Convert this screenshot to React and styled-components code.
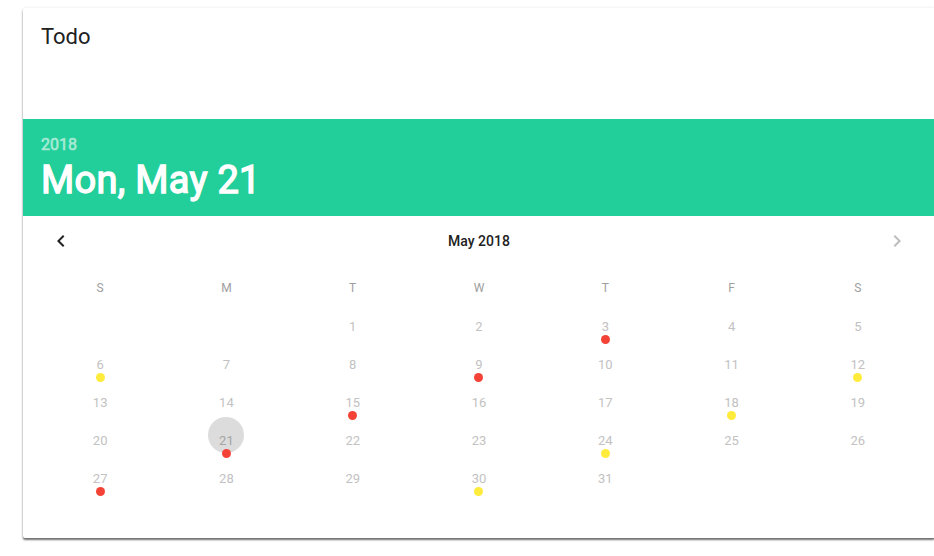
import React from "react";
import styled, { createGlobalStyle } from "styled-components";

const GlobalStyle = createGlobalStyle`
  html, body {
    margin: 0;
    padding: 0;
    background: #ffffff;
    overflow: hidden;
  }
  body {
    font-family: Roboto, "Liberation Sans", Arial, sans-serif;
  }
`;

const Page = styled.div`
  padding: 8px 0 0 23px;
  width: 1000px;
  height: 556px;
  box-sizing: border-box;
`;

const Card = styled.div`
  width: 912px;
  background: #fff;
  border-radius: 2px;
  box-shadow: 0 0 3px rgba(0, 0, 0, 0.1), 0 2px 2px rgba(0, 0, 0, 0.55);
`;

const CardHeader = styled.div`
  height: 111px;
  box-sizing: border-box;
  padding: 13px 18px 0;
`;

const Title = styled.h1`
  margin: 0;
  font-size: 22px;
  line-height: 32px;
  font-weight: 400;
  color: #212121;
`;

const Banner = styled.div`
  background: #22ce99;
  padding: 16px 18px 14px;
  display: flex;
  flex-direction: column;
  gap: 3px;
`;

/* medium weight: regular face thickened by a stroke */
const Year = styled.div`
  font-size: 16px;
  line-height: 20px;
  font-weight: 400;
  color: #a5ead4;
  -webkit-text-stroke: 0.7px #a5ead4;
  paint-order: stroke fill;
`;

const DateLine = styled.div`
  font-size: 38px;
  line-height: 44px;
  font-weight: 400;
  letter-spacing: 0.3px;
  color: #fff;
  -webkit-text-stroke: 1.4px #fff;
  paint-order: stroke fill;
`;

const Calendar = styled.div`
  padding: 0 14px 45px;
`;

const Nav = styled.div`
  height: 50px;
  display: flex;
  align-items: center;
  justify-content: space-between;
`;

const NavButton = styled.button`
  width: 48px;
  height: 48px;
  border: none;
  background: transparent;
  padding: 0;
  display: flex;
  align-items: center;
  justify-content: center;
  color: ${(p) => (p.$muted ? "#bdbdbd" : "#212121")};
  cursor: pointer;
`;

const MonthLabel = styled.div`
  font-size: 14px;
  font-weight: 500;
  color: #212121;
`;

const Weekdays = styled.div`
  margin-top: 6px;
  height: 31px;
  display: grid;
  grid-template-columns: repeat(7, 1fr);
  align-items: center;
`;

const Weekday = styled.div`
  text-align: center;
  font-size: 12px;
  color: #9e9e9e;
`;

const Days = styled.div`
  display: grid;
  grid-template-columns: repeat(7, 1fr);
  grid-auto-rows: 38px;
`;

const Cell = styled.div`
  position: relative;
  display: flex;
  justify-content: center;
`;

const DayButton = styled.div`
  width: 36px;
  height: 36px;
  box-sizing: border-box;
  padding-top: 16px;
  border-radius: 50%;
  text-align: center;
  font-size: 13px;
  line-height: 16px;
  color: ${(p) => (p.$selected ? "#a5a5a5" : "#c2c2c2")};
  background: ${(p) => (p.$selected ? "#dcdcdc" : "transparent")};
`;

const Dot = styled.span`
  position: absolute;
  top: 32px;
  left: 50%;
  width: 9px;
  height: 9px;
  margin-left: -4.5px;
  border-radius: 50%;
  background: ${(p) => p.$color};
`;

const Chevron = ({ dir }) => (
  <svg width="24" height="24" viewBox="0 0 24 24" fill="currentColor">
    {dir === "left" ? (
      <path d="M15.41 7.41L14 6l-6 6 6 6 1.41-1.41L10.83 12z" />
    ) : (
      <path d="M8.59 16.59L10 18l6-6-6-6-1.41 1.41L13.17 12z" />
    )}
  </svg>
);

const WEEKDAYS = ["S", "M", "T", "W", "T", "F", "S"];
const RED = "#f44336";
const YELLOW = "#ffeb3b";

// May 2018 begins on a Tuesday
const FIRST_WEEKDAY = 2;
const DAYS_IN_MONTH = 31;
const SELECTED = 21;

const markerFor = (day) => {
  if (day % 3 !== 0) return null;
  return (day / 3) % 2 === 1 ? RED : YELLOW;
};

export default function App() {
  const cells = [];
  for (let i = 0; i < FIRST_WEEKDAY; i++) cells.push(null);
  for (let d = 1; d <= DAYS_IN_MONTH; d++) cells.push(d);

  return (
    <>
      <GlobalStyle />
      <Page>
        <Card>
          <CardHeader>
            <Title>Todo</Title>
          </CardHeader>
          <Banner>
            <Year>2018</Year>
            <DateLine>Mon, May 21</DateLine>
          </Banner>
          <Calendar>
            <Nav>
              <NavButton aria-label="Previous month">
                <Chevron dir="left" />
              </NavButton>
              <MonthLabel>May 2018</MonthLabel>
              <NavButton $muted aria-label="Next month">
                <Chevron dir="right" />
              </NavButton>
            </Nav>
            <Weekdays>
              {WEEKDAYS.map((w, i) => (
                <Weekday key={i}>{w}</Weekday>
              ))}
            </Weekdays>
            <Days>
              {cells.map((d, i) => {
                if (d === null) return <Cell key={`e${i}`} />;
                const marker = markerFor(d);
                return (
                  <Cell key={d}>
                    <DayButton $selected={d === SELECTED}>{d}</DayButton>
                    {marker && <Dot $color={marker} />}
                  </Cell>
                );
              })}
            </Days>
          </Calendar>
        </Card>
      </Page>
    </>
  );
}
